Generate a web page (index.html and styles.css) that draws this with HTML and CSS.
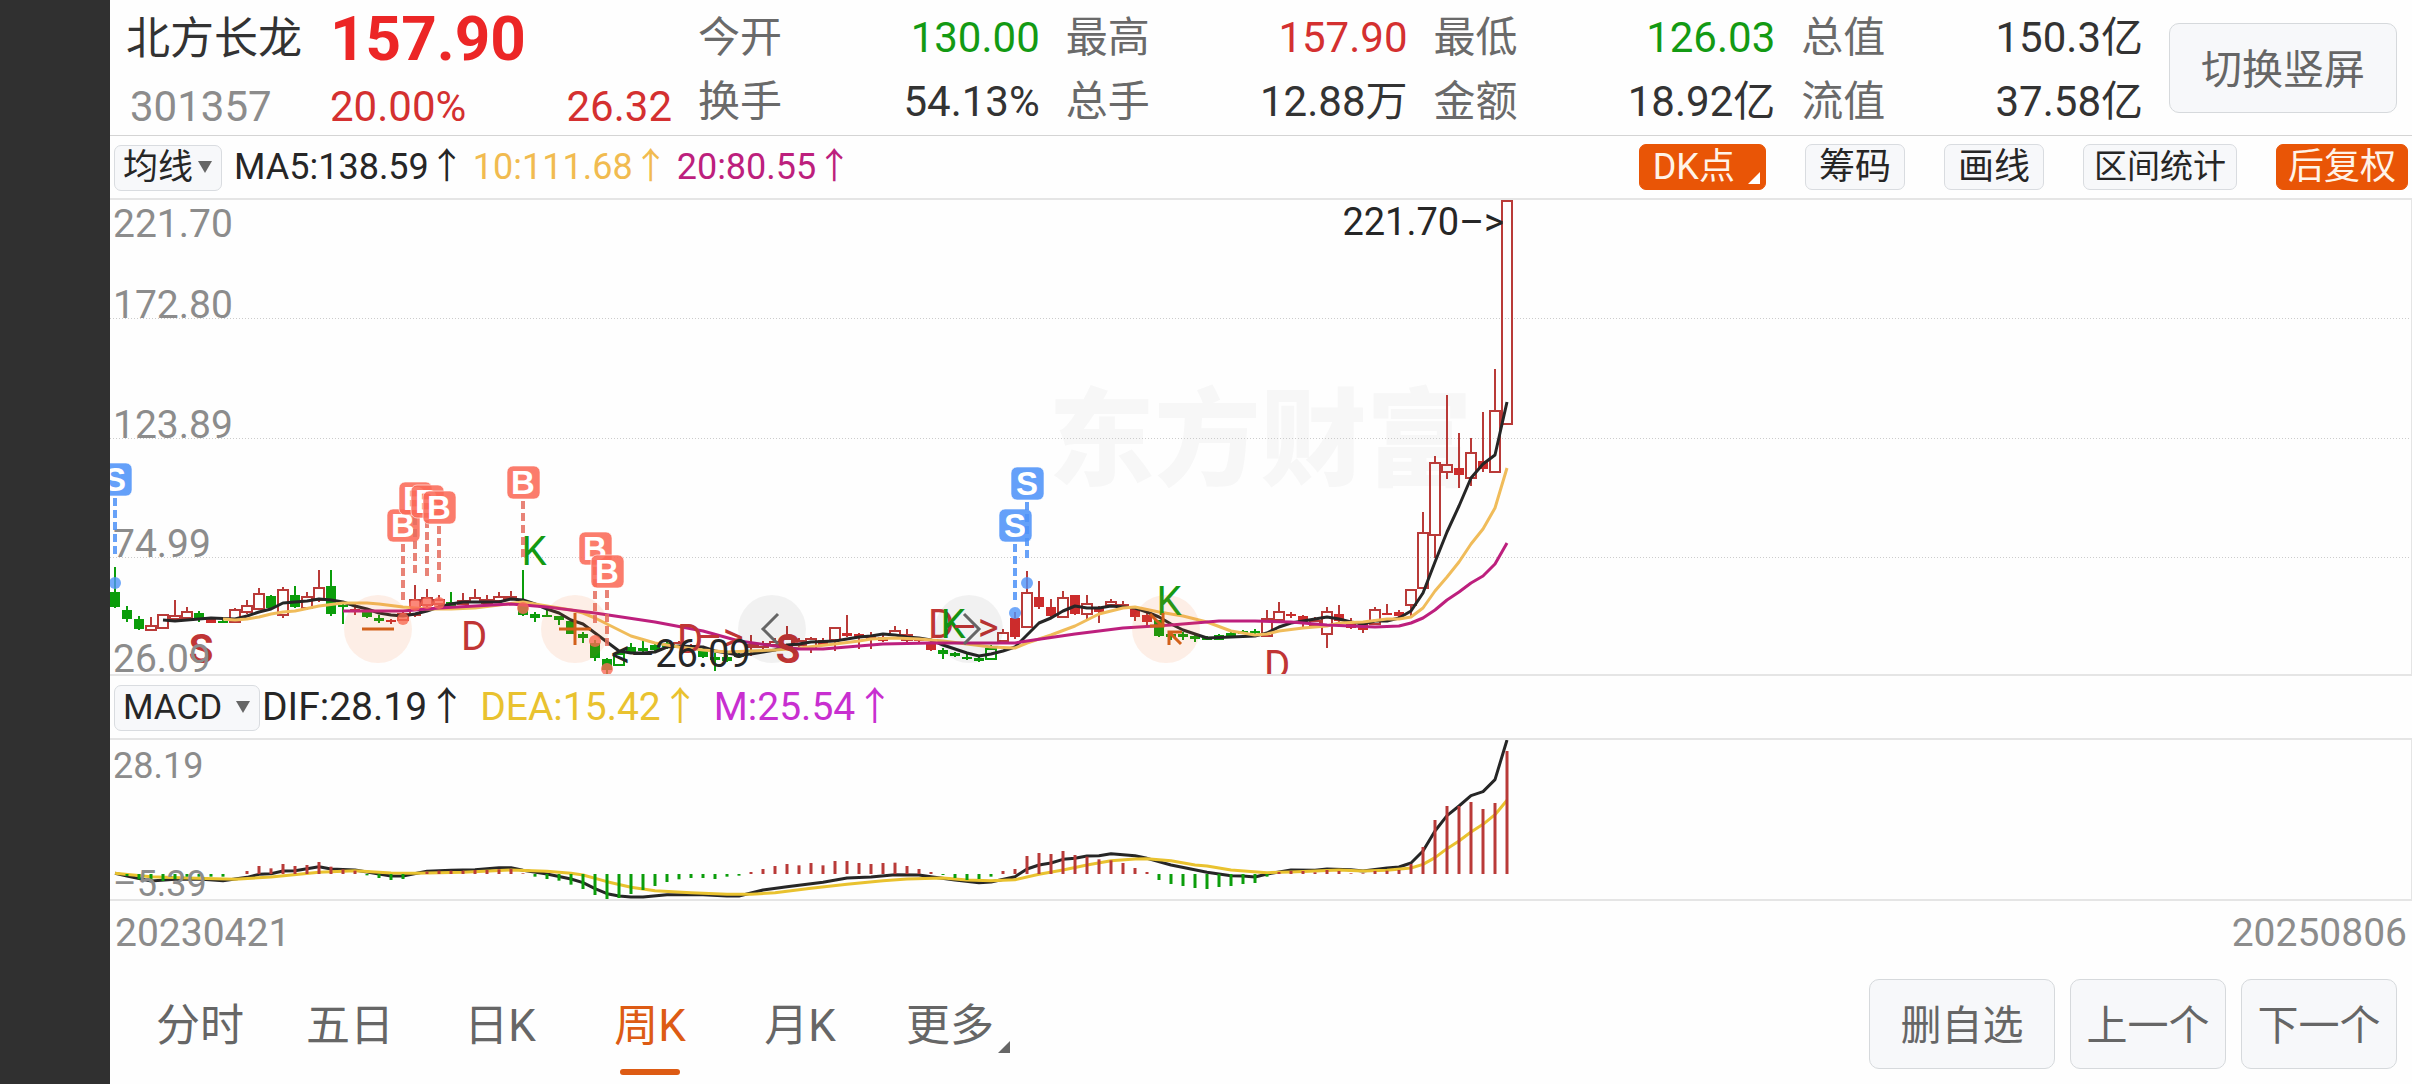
FILE: index.html
```html
<!DOCTYPE html>
<html lang="zh-CN">
<head>
<meta charset="UTF-8">
<meta name="viewport" content="width=device-width, initial-scale=1.0">
<title>北方长龙 301357 周K</title>
<link rel="stylesheet" href="styles.css">
</head>
<body>
    <aside class="notch"></aside>

    <main class="page">
        <!-- Quote header -->
        <header class="quote">
            <div class="summary">
                <h1 class="name">北方长龙</h1>
                <div class="price">157.90</div>
                <div class="code">301357</div>
                <div class="change">
                    <span>20.00%</span>
                    <span>26.32</span>
                </div>
            </div>
            <dl class="stats">
                <div><dt>今开</dt><dd class="down">130.00</dd></div>
                <div><dt>最高</dt><dd class="up">157.90</dd></div>
                <div><dt>最低</dt><dd class="down">126.03</dd></div>
                <div><dt>总值</dt><dd>150.3亿</dd></div>
                <div><dt>换手</dt><dd>54.13%</dd></div>
                <div><dt>总手</dt><dd>12.88万</dd></div>
                <div><dt>金额</dt><dd>18.92亿</dd></div>
                <div><dt>流值</dt><dd>37.58亿</dd></div>
            </dl>
            <button type="button" class="btn btn-rotate">切换竖屏</button>
        </header>

        <!-- Main chart -->
        <div class="toolbar">
            <div class="picker picker-ma">
                <select aria-label="主图指标">
                    <option>均线</option>
                </select>
            </div>
            <div class="legend">
                <span class="c-black">MA5:138.59↑</span>
                <span class="c-orange">10:111.68↑</span>
                <span class="c-magenta">20:80.55↑</span>
            </div>
            <div class="tools">
                <button type="button" class="tag tag-on tag-menu">DK点</button>
                <button type="button" class="tag">筹码</button>
                <button type="button" class="tag">画线</button>
                <button type="button" class="tag tag-long">区间统计</button>
                <button type="button" class="tag tag-on">后复权</button>
            </div>
        </div>
        <section class="plot">
            <svg id="kline" class="kline" role="img" aria-label="周K线">
                <text class="watermark" x="50%" y="277">东方财富</text>
                <g class="grid">
                    <line x1="0" x2="100%" y1="118" y2="118"/>
                    <line x1="0" x2="100%" y1="238" y2="238"/>
                    <line x1="0" x2="100%" y1="357" y2="357"/>
                </g>
                <g id="candles"></g>
                <g id="averages"></g>
                <g id="signals"></g>
                <g class="axis">
                    <text x="3" y="37">221.70</text>
                    <text x="3" y="118">172.80</text>
                    <text x="3" y="238">123.89</text>
                    <text x="3" y="357">74.99</text>
                    <text x="3" y="472">26.09</text>
                </g>
                <g id="trades"></g>
                <g class="extreme">
                    <text x="1394" y="35" text-anchor="end">221.70–&gt;</text>
                    <text x="501" y="467">&lt;–26.09</text>
                </g>
            </svg>
            <div class="zoombar">
                <button type="button" class="round round-warm" aria-label="缩小">
                    <svg viewBox="0 0 68 68"><path d="M18 34H50"/></svg>
                </button>
                <button type="button" class="round round-warm" aria-label="放大">
                    <svg viewBox="0 0 68 68"><path d="M18 34H50M34 18V50"/></svg>
                </button>
                <button type="button" class="round" aria-label="左移">
                    <svg viewBox="0 0 68 68"><path d="M40 19L25 34L40 49"/></svg>
                </button>
                <button type="button" class="round" aria-label="右移">
                    <svg viewBox="0 0 68 68"><path d="M29 19L44 34L29 49"/></svg>
                </button>
                <button type="button" class="round round-warm" aria-label="收起">
                    <svg viewBox="0 0 68 68"><path d="M18 19L30 31M31 18V31H18M49 49L37 37M37 50V37H50"/></svg>
                </button>
            </div>
        </section>

        <!-- MACD -->
        <div class="toolbar">
            <div class="picker picker-macd">
                <select aria-label="副图指标">
                    <option>MACD</option>
                </select>
            </div>
            <div class="legend legend-macd">
                <span class="c-black">DIF:28.19↑</span>
                <span class="c-yellow">DEA:15.42↑</span>
                <span class="c-purple">M:25.54↑</span>
            </div>
        </div>
        <section class="plot">
            <svg id="macd" class="macd" role="img" aria-label="MACD">
                <g id="dif"></g>
                <g id="bars"></g>
                <g class="axis axis-macd">
                    <text x="3" y="38">28.19</text>
                    <text x="3" y="156">–5.39</text>
                </g>
            </svg>
        </section>
        <div class="dates">
            <span>20230421</span>
            <span>20250806</span>
        </div>

        <footer class="bottom">
            <nav class="tabs">
                <a href="#">分时</a>
                <a href="#">五日</a>
                <a href="#">日K</a>
                <a href="#" class="active">周K</a>
                <a href="#">月K</a>
                <a href="#" class="more">更多</a>
            </nav>
            <div class="actions">
                <button type="button" class="btn btn-wide">删自选</button>
                <button type="button" class="btn">上一个</button>
                <button type="button" class="btn">下一个</button>
            </div>
        </footer>
    </main>

<script src="chart.js"></script>
</body>
</html>
```
FILE: styles.css
```css
* {
    box-sizing: border-box;
}

body {
    display: flex;
    margin: 0;
    min-height: 100vh;
    background-color: #fefefe;
    color: #333;
    font-family: Roboto, "Noto Sans CJK SC", sans-serif;
    font-size: 42px;
}

button, select {
    font-family: inherit;
    cursor: pointer;
}

.notch {
    flex: 0 0 110px;
    background-color: #303030;
}

.page {
    flex: 1;
    min-width: 0;
}

/* Quote header */
.quote {
    display: flex;
    align-items: center;
    gap: 26px;
    height: 136px;
    padding: 0 15px 0 16px;
    border-bottom: 1px solid #d4d4d4;
}

.summary {
    display: grid;
    grid-template-columns: 204px 342px;
    grid-template-rows: 68px 68px;
    padding-top: 10px;
    line-height: 68px;
}

.name {
    margin: 0;
    font-size: 44px;
    font-weight: 400;
}

.price {
    color: #ec2626;
    font-size: 62px;
    font-weight: 700;
}

.code {
    padding-left: 4px;
    color: #8c8c8c;
}

.change {
    display: flex;
    justify-content: space-between;
    color: #d43030;
}

.stats {
    flex: 1;
    display: grid;
    grid-template-columns: repeat(4, 1fr);
    column-gap: 26px;
    margin: 0;
    padding-top: 4px;
    line-height: 64px;
}

.stats div {
    display: flex;
    justify-content: space-between;
}

.stats dt {
    color: #6a6a6a;
}

.stats dd {
    margin: 0;
}

.up {
    color: #d43030;
}

.down {
    color: #139a13;
}

.btn {
    width: 156px;
    height: 90px;
    padding: 0 0 4px;
    border: 1px solid #d6d9dc;
    border-radius: 10px;
    background-color: #f7f8fa;
    color: #666;
    font-size: 41px;
}

.btn-wide {
    width: 186px;
}

.btn-rotate {
    width: 228px;
}

/* Indicator rows */
.toolbar {
    display: flex;
    align-items: center;
    height: 62px;
    padding: 0 4px;
    font-size: 36px;
    line-height: 46px;
}

.picker {
    position: relative;
}

.picker select {
    appearance: none;
    width: 100%;
    height: 46px;
    padding: 0 0 0 8px;
    border: 1px solid #d9dce0;
    border-radius: 7px;
    background-color: #f7f8fa;
    color: #262626;
    font-size: 35px;
    line-height: 44px;
}

.picker::after {
    content: "";
    position: absolute;
    right: 10px;
    top: 17px;
    border: 7px solid transparent;
    border-top: 12px solid #666;
    border-bottom: 0;
    pointer-events: none;
}

.picker-ma {
    width: 108px;
}

.picker-macd {
    width: 146px;
}

.legend {
    display: flex;
    gap: 8px;
    padding-left: 12px;
}

.legend-macd {
    gap: 14px;
    padding-left: 2px;
    font-size: 39px;
}

.c-black {
    color: #262626;
}

.c-orange {
    color: #f1bb50;
}

.c-magenta {
    color: #bd1f7d;
}

.c-yellow {
    color: #e9c22f;
}

.c-purple {
    color: #c82fd0;
}

.tools {
    display: flex;
    gap: 39px;
    margin-left: auto;
}

.tag {
    height: 46px;
    padding: 0 13px;
    border: 1px solid #d9dce0;
    border-radius: 7px;
    background-color: #f7f8fa;
    color: #262626;
    font-size: 36px;
    line-height: 44px;
}

.tag-long {
    padding: 0 10px;
    font-size: 33px;
}

.tag-on {
    padding: 0 11px;
    border-color: #e95506;
    background-color: #e95506;
    color: #fff3e8;
}

.tag-menu {
    position: relative;
    padding: 0 30px 0 13px;
}

.tag-menu::after,
.more::after {
    content: "";
    position: absolute;
    right: 5px;
    bottom: 5px;
    border-left: 12px solid transparent;
    border-bottom: 12px solid #fff;
}

/* Plots */
.plot {
    position: relative;
    border: 2px solid #e5e5e5;
    border-width: 2px 1px 2px 0;
}

.plot > svg {
    display: block;
    width: 100%;
    overflow: hidden;
}

.kline {
    height: 474px;
}

.macd {
    height: 159px;
}

.watermark {
    fill: #f7f7f7;
    font-size: 106px;
    font-weight: 900;
    text-anchor: middle;
}

.grid line {
    stroke: #ccc;
    stroke-dasharray: 1 2;
    shape-rendering: crispEdges;
}

.axis text {
    fill: #8c8c8c;
    font-size: 39px;
}

.axis-macd text {
    font-size: 36px;
}

.extreme text {
    fill: #262626;
    font-size: 38px;
}

.line {
    fill: none;
    stroke-width: 3;
    stroke-linejoin: round;
}

.line-black {
    stroke: #262626;
}

.line-orange {
    stroke: #f0bc5a;
}

.line-magenta {
    stroke: #bd1f7d;
}

.line-yellow {
    stroke: #e9c22f;
}

.signal {
    font-size: 40px;
    text-anchor: middle;
}

.signal-d, .signal-s {
    fill: #c03535;
}

.signal-s {
    font-weight: 700;
}

.signal-k {
    fill: #139a13;
}

.trade rect {
    stroke: #fff;
    stroke-opacity: 0.6;
}

.trade text {
    fill: #fff;
    font-family: "Liberation Sans", Arial, sans-serif;
    font-size: 33px;
    font-weight: 700;
    text-anchor: middle;
}

.trade line {
    stroke-width: 4;
    stroke-dasharray: 8 4;
}

.trade-b {
    fill: #fa6a58;
    stroke: #e56e60;
}

.trade-s {
    fill: #4f93f8;
    stroke: #4f93f8;
}

.zoombar {
    position: absolute;
    left: 234px;
    bottom: 11px;
    display: flex;
    gap: 129px;
}

.round {
    width: 68px;
    height: 68px;
    padding: 0;
    border: 0;
    border-radius: 50%;
    background-color: rgba(0, 0, 0, 0.05);
    color: #666;
}

.round-warm {
    background-color: rgba(245, 110, 40, 0.11);
    color: #d2601a;
}

.round svg {
    display: block;
    fill: none;
    stroke: currentColor;
    stroke-width: 3;
}

.dates {
    display: flex;
    justify-content: space-between;
    padding: 2px 5px 0;
    color: #8c8c8c;
    font-size: 39px;
    line-height: 60px;
}

/* Bottom bar */
.bottom {
    display: flex;
    align-items: center;
    justify-content: space-between;
    height: 121px;
    padding: 0 15px;
}

.tabs {
    display: flex;
}

.tabs a {
    position: relative;
    width: 150px;
    padding-top: 4px;
    color: #666;
    font-size: 44px;
    line-height: 86px;
    text-align: center;
    text-decoration: none;
}

.tabs .active {
    color: #dd5b14;
}

.tabs .active::after {
    content: "";
    position: absolute;
    left: 45px;
    bottom: -6px;
    width: 60px;
    height: 6px;
    border-radius: 3px;
    background-color: #dd5b14;
}

.more::after {
    right: 15px;
    bottom: 16px;
    border-bottom-color: #666;
}

.actions {
    display: flex;
    gap: 15px;
}
```
FILE: chart.js
```js
const NS = 'http://www.w3.org/2000/svg';
const RED = '#b93a38';
const RED_FILL = '#cc2c2c';
const GREEN = '#0b9d0b';

// one candle every 12px, the first one 5px from the edge
const px = i => 5 + 12 * i;

function add(parent, tag, attrs, text) {
    const el = document.createElementNS(NS, tag);
    for (const key in attrs) el.setAttribute(key, attrs[key]);
    if (text) el.textContent = text;
    parent.appendChild(el);
    return el;
}

// high, body top, body bottom, low, type
// r = hollow red, R = solid red, g = solid green, G = hollow green
const candles = [
    [367,392,407,408,'g'],[406,410,419,422,'g'],[416,419,429,430,'g'],[417,426,430,430,'r'],[414,415,428,429,'r'],
    [400,416,419,419,'r'],[407,412,418,418,'r'],[411,413,419,422,'g'],[419,419,423,423,'R'],[418,421,422,423,'g'],
    [408,410,422,423,'r'],[400,406,412,414,'r'],[388,394,409,410,'r'],[395,396,408,408,'g'],[387,390,415,418,'r'],
    [386,395,407,408,'g'],[392,397,408,410,'r'],[370,388,400,402,'r'],[370,386,414,416,'g'],[403,405,407,424,'g'],
    [404,409,411,415,'R'],[412,412,417,418,'g'],[415,418,421,423,'g'],[419,420,422,424,'R'],[412,414,420,421,'r'],
    [385,400,415,417,'r'],[389,398,405,407,'r'],[395,400,404,409,'r'],[392,402,406,406,'g'],[393,401,404,404,'r'],
    [389,398,402,403,'r'],[395,400,403,404,'r'],[392,397,401,402,'r'],[391,397,399,400,'r'],[370,400,415,416,'g'],
    [412,414,418,422,'g'],[409,415,417,417,'g'],[416,416,420,425,'g'],[420,421,434,434,'g'],[432,434,438,443,'g'],
    [440,443,458,461,'g'],[458,459,470,476,'g'],[453,454,465,466,'G'],[443,447,452,453,'g'],[440,448,451,452,'g'],
    [443,445,450,451,'g'],[442,443,447,449,'g'],[441,443,446,447,'r'],[444,446,448,449,'r'],[448,451,457,458,'g'],
    [453,457,460,471,'g'],[455,457,461,462,'g'],[452,454,457,458,'g'],[435,445,447,456,'r'],[441,444,447,449,'r'],
    [438,442,445,447,'r'],[426,439,446,448,'r'],[438,441,445,447,'r'],[437,439,449,453,'r'],[438,440,445,446,'R'],
    [427,428,440,451,'r'],[415,433,436,437,'R'],[433,434,438,449,'R'],[432,435,439,449,'R'],[435,437,441,442,'R'],
    [426,431,435,436,'r'],[429,435,440,442,'r'],[438,439,441,442,'R'],[441,442,450,451,'R'],[448,450,454,459,'g'],
    [452,453,456,457,'g'],[454,457,459,460,'g'],[456,458,461,462,'g'],[445,449,459,460,'G'],[429,433,441,442,'r'],
    [412,418,437,439,'R'],[371,393,427,427,'r'],[381,397,407,409,'R'],[399,407,416,417,'R'],[391,398,417,418,'r'],
    [395,395,414,415,'R'],[395,404,414,419,'r'],[406,407,412,423,'R'],[399,402,405,406,'r'],[401,405,407,409,'r'],
    [408,408,417,421,'R'],[413,415,422,427,'R'],[420,420,436,437,'g'],[432,434,437,440,'g'],[432,434,437,440,'g'],
    [434,436,439,442,'g'],[436,438,440,440,'g'],[434,435,440,440,'g'],[431,433,436,436,'g'],[430,431,434,434,'g'],
    [429,431,433,434,'g'],[410,419,436,437,'r'],[402,412,420,421,'r'],[412,414,415,418,'R'],[415,416,422,427,'R'],
    [417,421,425,426,'r'],[407,412,434,448,'r'],[405,414,421,422,'R'],[418,423,428,429,'R'],[424,424,430,433,'R'],
    [407,410,424,425,'r'],[404,413,415,415,'R'],[410,412,416,417,'R'],[390,390,405,416,'r'],[312,333,388,389,'r'],
    [256,263,335,358,'r'],[195,265,272,279,'r'],[233,268,275,288,'R'],[238,253,278,286,'r'],[212,261,269,272,'R'],
    [169,211,272,272,'r'],[0,1,224,224,'r']
];

const candleLayer = document.getElementById('candles');
candles.forEach(([high, top, bottom, low, type], i) => {
    const x = px(i);
    const isRed = type === 'r' || type === 'R';
    const hollow = type === 'r' || type === 'G';
    const color = isRed ? RED : GREEN;
    add(candleLayer, 'path', {
        d: hollow ? `M${x} ${high}V${top}M${x} ${bottom}V${low}` : `M${x} ${high}V${low}`,
        stroke: color,
        'stroke-width': 2
    });
    if (hollow) {
        add(candleLayer, 'rect', {
            x: x - 5, y: top, width: 10, height: Math.max(bottom - top, 1),
            fill: 'none', stroke: color, 'stroke-width': 2
        });
    } else {
        add(candleLayer, 'rect', {
            x: x - 5, y: top, width: 10, height: Math.max(bottom - top, 2),
            fill: isRed ? RED_FILL : GREEN
        });
    }
});

// [candle index, y] pairs
const ma5 = [[4,420],[5,421],[6,420],[8,418],[10,419],[11,416],[12,412],[13,409],[14,403],[15,402],[16,401],[17,399],
    [18,400],[19,402],[20,406],[21,409],[22,413],[23,415],[24,416],[25,414],[26,411],[27,407],[28,404],[29,402],[32,402],
    [33,399],[34,400],[35,404],[36,409],[37,413],[38,420],[39,424],[40,433],[41,442],[42,451],[43,453],[44,453],[45,452],
    [46,447],[47,446],[49,447],[50,451],[51,453],[52,455],[53,454],[54,452],[55,450],[56,445],[57,444],[58,442],[60,441],
    [61,439],[62,437],[63,436],[64,434],[65,435],[66,437],[67,438],[68,440],[69,445],[70,449],[71,453],[72,456],[73,454],
    [74,451],[75,447],[76,435],[77,423],[78,418],[79,411],[80,406],[81,408],[82,408],[83,406],[84,407],[85,408],[86,412],
    [87,417],[88,424],[89,430],[90,434],[91,438],[93,437],[95,436],[96,433],[97,427],[98,423],[99,421],[100,419],[101,417],
    [102,419],[103,422],[104,424],[105,421],[106,421],[107,418],[108,411],[109,393],[110,362],[111,332],[112,306],
    [113,278],[114,264],[115,255],[116,202]];
const ma10 = [[9,419],[10,420],[11,419],[12,417],[13,414],[14,412],[15,411],[17,406],[19,403],[21,403],[22,404],[24,407],
    [26,409],[28,409],[30,408],[32,405],[34,402],[36,406],[38,410],[39,413],[40,418],[41,424],[43,436],[45,443],[47,447],
    [49,450],[51,452],[53,451],[55,450],[57,448],[60,444],[62,441],[63,439],[65,438],[67,439],[69,441],[71,444],[73,447],
    [75,448],[76,443],[78,435],[80,426],[82,414],[84,408],[85,407],[87,412],[89,416],[91,422],[93,431],[95,435],[96,434],
    [97,431],[99,428],[101,426],[102,423],[104,422],[106,419],[107,419],[108,417],[109,408],[110,391],[111,377],[112,362],
    [113,344],[114,329],[115,308],[116,268]];
const ma20 = [[19,411],[22,411],[24,411],[27,408],[30,406],[33,404],[36,407],[40,413],[45,422],[49,431],[52,441],[55,446],
    [57,449],[59,449],[62,446],[64,444],[68,443],[75,443],[76,441],[80,434],[84,428],[88,425],[92,421],[95,421],[98,422],
    [101,425],[105,427],[107,426],[108,423],[109,418],[110,410],[111,400],[112,392],[113,383],[114,376],[115,364],[116,343]];

function drawLine(layer, points, name, toY = y => y) {
    add(layer, 'polyline', {
        class: 'line ' + name,
        points: points.map(([i, y]) => px(i) + ',' + toY(y)).join(' ')
    });
}

const averageLayer = document.getElementById('averages');
drawLine(averageLayer, ma5, 'line-black');
drawLine(averageLayer, ma10, 'line-orange');
drawLine(averageLayer, ma20, 'line-magenta');

// D / K / S letters: text, x, baseline
const signals = [
    ['S', 91, 463], ['D', 364, 450], ['K', 424, 365], ['D', 580, 453], ['–>', 610, 451],
    ['S', 678, 463], ['D', 831, 438], ['K', 843, 438], ['–>', 865, 441], ['K', 1059, 415], ['D', 1167, 479]
];
const signalLayer = document.getElementById('signals');
signals.forEach(([text, x, y]) => {
    const kind = text === 'K' ? 'k' : text === 'S' ? 's' : 'd';
    add(signalLayer, 'text', { class: 'signal signal-' + kind, x, y }, text);
});

// buy and sell marks: type, candle, box centre, end of the dashes, dot
const trades = [
    ['S', 0, 279, 354, 383], ['B', 24, 325, 400, 419], ['B', 25, 298, 373, 405], ['B', 26, 301, 376, 403],
    ['B', 27, 307, 382, 403], ['B', 34, 282, 357, 408], ['B', 40, 348, 423, 441], ['B', 41, 371, 446, 469],
    ['S', 75, 325, 400, 413], ['S', 76, 283, 358, 383]
];
const tradeLayer = document.getElementById('trades');
trades.forEach(([type, i, y, end, dot]) => {
    const x = px(i);
    const g = add(tradeLayer, 'g', { class: 'trade trade-' + type.toLowerCase() });
    add(g, 'line', { x1: x, x2: x, y1: y + 19, y2: end, opacity: 0.85 });
    add(g, 'circle', { cx: x, cy: dot, r: 6, stroke: 'none', opacity: 0.8 });
    add(g, 'rect', { x: x - 16, y: y - 16, width: 33, height: 33, rx: 6, 'fill-opacity': 0.88 });
    add(g, 'text', { x, y: y + 12, stroke: 'none' }, type);
});

// MACD plot: three units to a pixel, the zero line is at 582
const macdY = v => v / 3 - 60;
const ZERO = 582;
const bars = [582,588,598,606,603,597,590,590,590,590,582,573,558,565,552,558,555,546,560,568,572,586,594,600,597,582,
    575,572,572,572,570,570,568,567,580,590,597,602,614,627,645,660,654,642,630,618,606,598,594,594,597,590,587,576,567,
    558,552,556,549,556,543,543,549,552,549,548,558,567,576,585,594,600,597,590,573,567,528,519,522,513,525,530,538,541,
    549,564,576,600,612,618,624,627,621,618,612,609,590,576,573,573,577,570,573,580,580,573,572,570,552,501,420,378,378,
    366,387,369,213];
const dif = [[0,580],[1,588],[3,603],[5,598],[7,597],[9,602],[11,592],[12,583],[13,581],[14,573],[15,572],[17,560],
    [18,567],[20,570],[22,582],[23,588],[24,588],[26,574],[28,571],[30,569],[32,563],[33,563],[34,571],[36,582],[38,597],
    [39,608],[40,626],[41,641],[42,648],[43,651],[44,651],[46,644],[49,644],[51,648],[52,648],[54,630],[56,620],[59,607],
    [61,594],[63,591],[65,584],[67,585],[68,590],[70,600],[72,608],[73,606],[75,590],[76,567],[77,555],[78,549],[79,538],
    [80,535],[81,528],[82,527],[83,521],[85,527],[86,535],[88,555],[91,577],[93,587],[94,588],[95,591],[96,582],[98,570],
    [100,571],[101,567],[103,569],[104,573],[106,564],[107,561],[108,549],[109,513],[110,453],[111,407],[112,378],
    [113,347],[114,335],[115,299],[116,180]];
const dea = [[0,580],[3,590],[6,594],[10,598],[13,591],[17,577],[20,572],[23,579],[25,580],[29,577],[33,570],[36,574],
    [38,580],[39,585],[41,605],[43,622],[45,632],[48,638],[51,643],[53,643],[55,638],[58,625],[61,613],[64,602],[66,597],
    [69,594],[71,600],[73,602],[75,599],[77,583],[79,570],[81,555],[83,542],[85,537],[86,536],[88,542],[90,555],[91,558],
    [93,570],[96,578],[98,576],[100,573],[102,570],[104,573],[106,571],[108,564],[109,553],[110,533],[111,506],[112,483],
    [113,456],[114,433],[115,404],[116,361]];

const difLayer = document.getElementById('dif');
drawLine(difLayer, dif, 'line-black', macdY);
drawLine(difLayer, dea, 'line-yellow', macdY);

const barLayer = document.getElementById('bars');
bars.forEach((v, i) => {
    if (v === ZERO) return;
    add(barLayer, 'line', {
        x1: px(i), x2: px(i), y1: macdY(ZERO), y2: macdY(v),
        stroke: v < ZERO ? RED : GREEN, 'stroke-width': 3
    });
});
```
